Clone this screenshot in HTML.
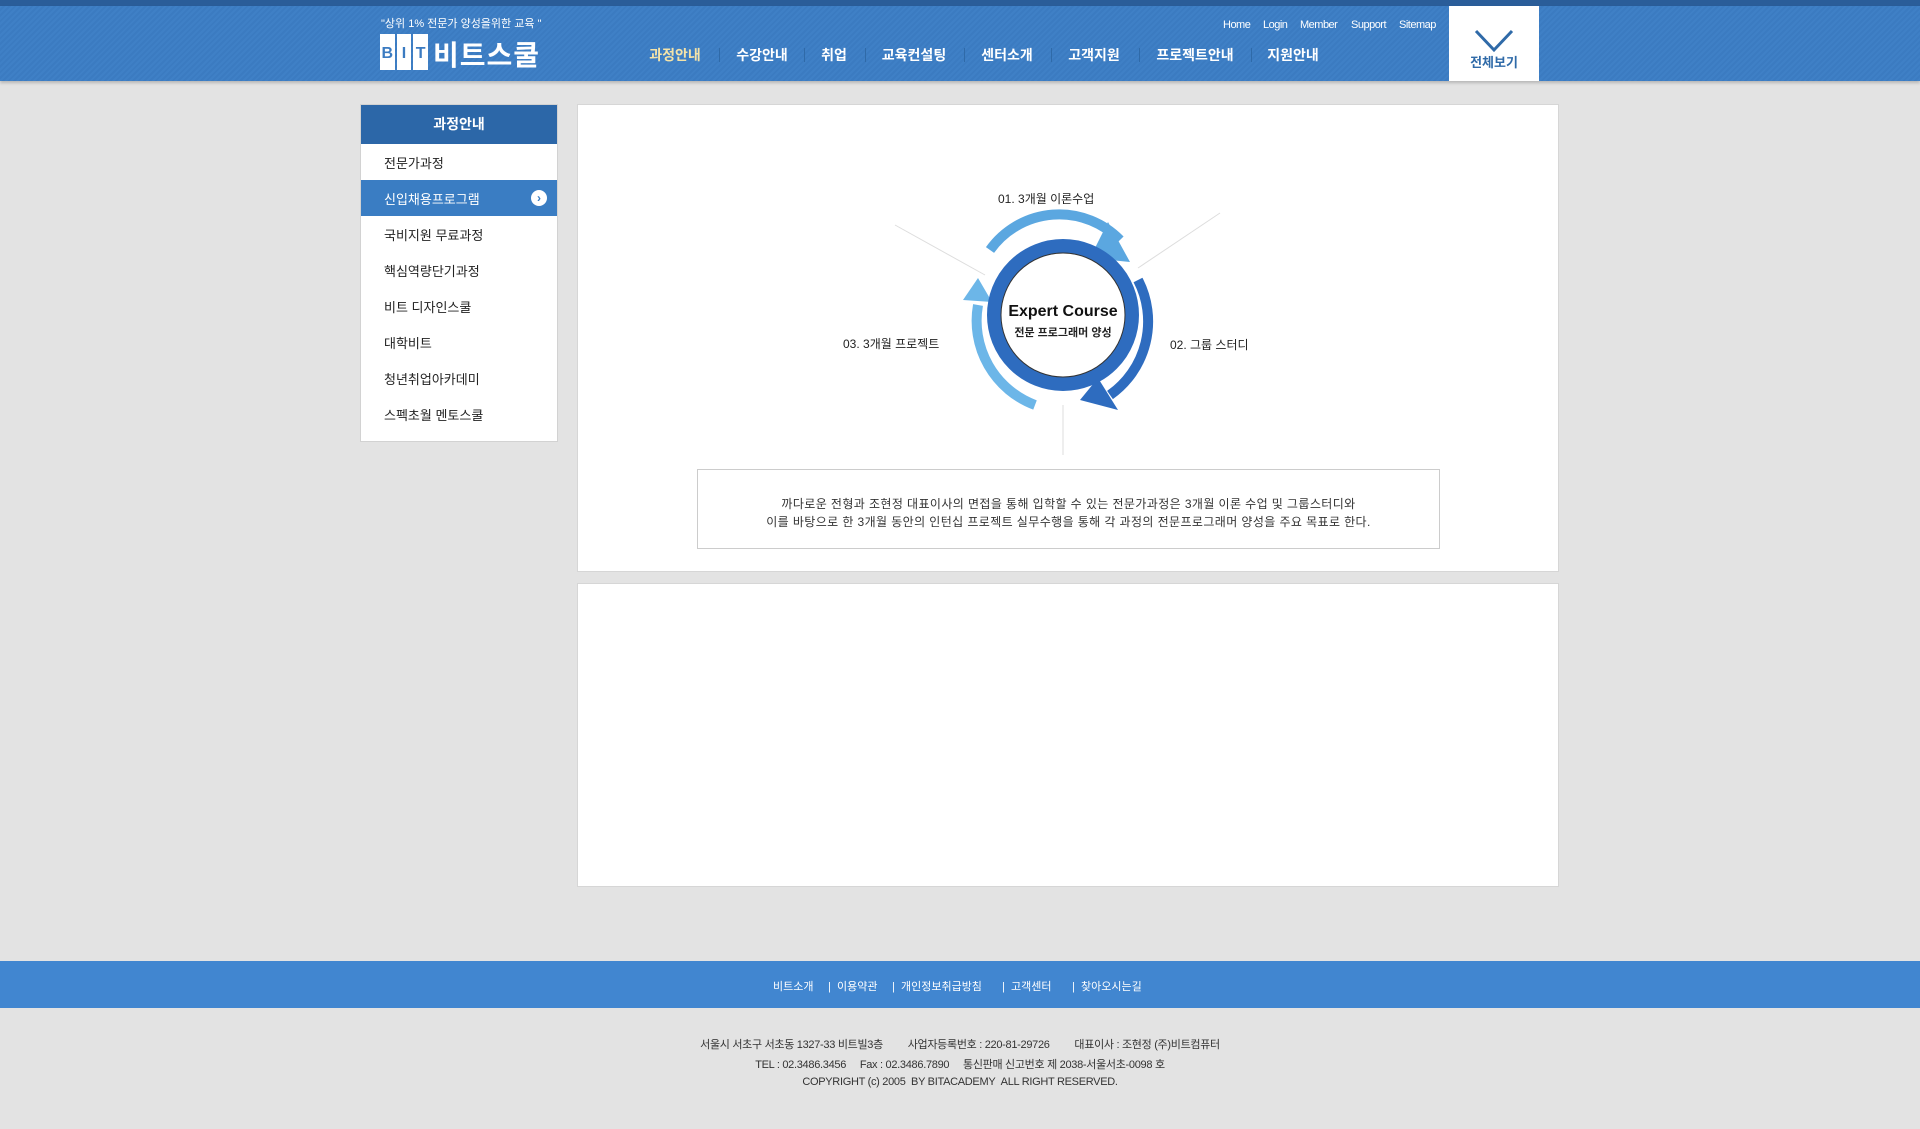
<!DOCTYPE html>
<html><head><meta charset="utf-8"><style>
*{margin:0;padding:0;box-sizing:border-box}
body{width:1920px;height:1129px;background:#e3e3e3;font-family:"Liberation Sans","Noto Sans CJK KR",sans-serif;position:relative;overflow:hidden}
.abs{position:absolute}
#top{left:0;top:0;width:1920px;height:6px;background:#2a5d99}
#hdr{left:0;top:6px;width:1920px;height:75px;background:repeating-linear-gradient(135deg,#3f80c6 0 2px,#3b7bc1 2px 4px);box-shadow:0 2px 3px rgba(0,0,0,.2)}
.nav{top:45px;color:#fff;font-size:14px;font-weight:bold;transform:translateX(-50%);white-space:nowrap}
.sep{top:48px;width:1px;height:14px;background:#2f6aa8}
.tl{top:19px;color:#fff;font-size:11px;letter-spacing:-.5px}
#all{left:1449px;top:6px;width:90px;height:75px;background:#fff}
#side{left:360px;top:104px;width:198px;height:338px;background:#fff;border:1px solid #d2d2d2}
#side .t{height:39px;background:#2c67a8;color:#fff;font-size:14px;font-weight:bold;text-align:center;line-height:39px}
#side .i{height:36px;line-height:40px;padding-left:23px;font-size:13px;color:#222}
#side .s{background:#3a7dc3;color:#fff}
.box{background:#fff;border:1px solid #d6d6d6}
.lbl{font-size:12px;color:#222;white-space:nowrap}
#ft{left:0;top:961px;width:1920px;height:47px;background:#4186d0}
.fl{top:978px;color:#fff;font-size:11px;white-space:nowrap}
.fi{left:0;width:1920px;text-align:center;font-size:11px;color:#333;letter-spacing:-.3px}
</style></head><body>
<div id="top" class="abs"></div>
<div id="hdr" class="abs"></div>
<div class="abs" style="left:381px;top:15px;color:#fff;font-size:11px">"상위 1% 전문가 양성을위한 교육 "</div>
<div class="abs" style="left:380px;top:34px;width:48px;height:36px;display:flex;gap:2px">
<div style="flex:1;background:#fff;color:#3b7bc1;font-weight:bold;font-size:16px;text-align:center;line-height:40px">B</div>
<div style="flex:1;background:#fff;color:#3b7bc1;font-weight:bold;font-size:16px;text-align:center;line-height:40px">I</div>
<div style="flex:1;background:#fff;color:#3b7bc1;font-weight:bold;font-size:16px;text-align:center;line-height:40px">T</div></div>
<div class="abs" style="left:433px;top:34px;color:#fff;font-size:28px;font-weight:bold;letter-spacing:1px">비트스쿨</div>
<div class="abs nav" style="left:675px;color:#f4e3a8">과정안내</div>
<div class="abs sep" style="left:719px"></div>
<div class="abs nav" style="left:762px">수강안내</div>
<div class="abs sep" style="left:804px"></div>
<div class="abs nav" style="left:834px">취업</div>
<div class="abs sep" style="left:865px"></div>
<div class="abs nav" style="left:914px">교육컨설팅</div>
<div class="abs sep" style="left:964px"></div>
<div class="abs nav" style="left:1007px">센터소개</div>
<div class="abs sep" style="left:1051px"></div>
<div class="abs nav" style="left:1094px">고객지원</div>
<div class="abs sep" style="left:1139px"></div>
<div class="abs nav" style="left:1195px">프로젝트안내</div>
<div class="abs sep" style="left:1251px"></div>
<div class="abs nav" style="left:1293px">지원안내</div>
<div class="abs tl" style="left:1223px">Home</div>
<div class="abs tl" style="left:1263px">Login</div>
<div class="abs tl" style="left:1300px">Member</div>
<div class="abs tl" style="left:1351px">Support</div>
<div class="abs tl" style="left:1399px">Sitemap</div>
<div id="all" class="abs">
<svg width="90" height="40" style="position:absolute;left:0;top:12px"><path d="M27 13 L45 32 L63 13" fill="none" stroke="#2f6aa8" stroke-width="3"/></svg>
<div style="position:absolute;top:46px;width:90px;text-align:center;font-size:13px;color:#2f6aa8;font-weight:bold">전체보기</div></div>

<div id="side" class="abs">
<div class="t">과정안내</div>
<div class="i">전문가과정</div>
<div class="i s" style="position:relative">신입채용프로그램<span style="position:absolute;right:10px;top:10px;width:16px;height:16px;border-radius:50%;background:#fff;color:#3a7dc3;font-size:12px;line-height:16px;text-align:center;font-weight:bold">›</span></div>
<div class="i">국비지원 무료과정</div>
<div class="i">핵심역량단기과정</div>
<div class="i">비트 디자인스쿨</div>
<div class="i">대학비트</div>
<div class="i">청년취업아카데미</div>
<div class="i">스펙초월 멘토스쿨</div>
</div>

<div class="abs box" style="left:577px;top:104px;width:982px;height:468px"></div>
<div class="abs box" style="left:577px;top:583px;width:982px;height:304px"></div>

<svg class="abs" style="left:880px;top:200px" width="360" height="260" viewBox="0 0 360 260">
<line x1="15" y1="25" x2="105" y2="75" stroke="#ddd"/>
<line x1="340" y1="13" x2="258" y2="68" stroke="#ddd"/>
<line x1="183" y1="205" x2="183" y2="255" stroke="#ddd"/>
<path d="M110 50 A85 85 0 0 1 240 40" fill="none" stroke="#5ba7e0" stroke-width="10"/>
<path d="M228 22 L250 62 L210 58 Z" fill="#5ba7e0"/>
<path d="M258 80 A90 90 0 0 1 230 195" fill="none" stroke="#2e6cbf" stroke-width="10"/>
<path d="M218 178 L238 210 L200 200 Z" fill="#2e6cbf"/>
<path d="M155 205 A90 90 0 0 1 98 105" fill="none" stroke="#6cb6e8" stroke-width="10"/>
<path d="M83 100 L98 78 L112 102 Z" fill="#6cb6e8"/>
<circle cx="183" cy="115" r="69" fill="#fff" stroke="#2e6cbf" stroke-width="14"/>
<circle cx="183" cy="115" r="62" fill="none" stroke="#333" stroke-width="1"/>
</svg>
<div class="abs" style="left:963px;top:303px;width:200px;text-align:center;font-size:16px;font-weight:bold;color:#111">Expert Course</div>
<div class="abs" style="left:963px;top:324px;width:200px;text-align:center;font-size:11px;font-weight:bold;color:#222">전문 프로그래머 양성</div>
<div class="abs lbl" style="left:998px;top:190px">01. 3개월 이론수업</div>
<div class="abs lbl" style="left:1170px;top:336px">02. 그룹 스터디</div>
<div class="abs lbl" style="left:843px;top:335px">03. 3개월 프로젝트</div>

<div class="abs" style="left:697px;top:469px;width:743px;height:80px;background:#fff;border:1px solid #ccc;font-size:12px;letter-spacing:.4px;color:#333;text-align:center;padding-top:25px;line-height:18px">까다로운 전형과 조현정 대표이사의 면접을 통해 입학할 수 있는 전문가과정은 3개월 이론 수업 및 그룹스터디와<br>이를 바탕으로 한 3개월 동안의 인턴십 프로젝트 실무수행을 통해 각 과정의 전문프로그래머 양성을 주요 목표로 한다.</div>

<div id="ft" class="abs"></div>
<div class="abs fl" style="left:773px">비트소개</div>
<div class="abs fl" style="left:828px">| &nbsp;이용약관</div>
<div class="abs fl" style="left:892px">| &nbsp;개인정보취급방침</div>
<div class="abs fl" style="left:1002px">| &nbsp;고객센터</div>
<div class="abs fl" style="left:1072px">| &nbsp;찾아오시는길</div>
<div class="abs fi" style="top:1036px">서울시 서초구 서초동 1327-33 비트빌3층 &nbsp; &nbsp; &nbsp; &nbsp; 사업자등록번호 : 220-81-29726 &nbsp; &nbsp; &nbsp; &nbsp; 대표이사 : 조현정 (주)비트컴퓨터</div>
<div class="abs fi" style="top:1056px">TEL : 02.3486.3456 &nbsp; &nbsp; Fax : 02.3486.7890 &nbsp; &nbsp; 통신판매 신고번호 제 2038-서울서초-0098 호</div>
<div class="abs fi" style="top:1076px">COPYRIGHT (c) 2005 &nbsp;BY BITACADEMY &nbsp;ALL RIGHT RESERVED.</div>
</body></html>
